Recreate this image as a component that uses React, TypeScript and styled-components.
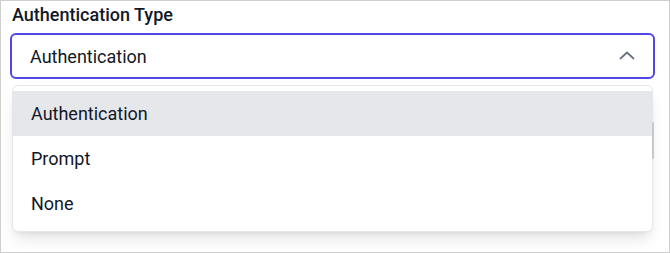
import styled, { createGlobalStyle } from "styled-components";

const GlobalStyle = createGlobalStyle`
  html, body {
    margin: 0;
    padding: 0;
    background: #ffffff;
  }
  * {
    box-sizing: border-box;
  }
`;

const Frame = styled.div`
  width: 670px;
  height: 253px;
  border: 1px solid #cfcfcf;
  padding: 3px 14px 0 9px;
  font-family: Roboto, "Liberation Sans", sans-serif;
  color: #111827;
  overflow: hidden;
`;

const Label = styled.label`
  display: block;
  margin-left: 2px;
  font-size: 18px;
  font-weight: 500;
  line-height: 22px;
  color: #111827;
  margin-bottom: 7px;
`;

const SelectWrap = styled.div`
  position: relative;
`;

const Trigger = styled.button`
  width: 100%;
  height: 46px;
  display: flex;
  align-items: center;
  justify-content: space-between;
  padding: 0 16px 0 18px;
  border: 2px solid #4f46e5;
  border-radius: 6px;
  background: #ffffff;
  font-family: inherit;
  font-size: 18px;
  color: #111827;
  cursor: pointer;
`;

const Chevron = styled.svg`
  width: 20px;
  height: 20px;
  color: #6b7280;
`;

const Menu = styled.ul`
  position: absolute;
  top: 52px;
  left: 2px;
  right: 2px;
  margin: 0;
  padding: 5px 0;
  list-style: none;
  background: #ffffff;
  border: 1px solid #e5e7eb;
  border-radius: 6px;
  box-shadow: 0 10px 15px -3px rgba(0, 0, 0, 0.1),
    0 4px 6px -4px rgba(0, 0, 0, 0.1);
  z-index: 10;
`;

const ScrollThumb = styled.span`
  position: absolute;
  top: 36px;
  right: -2px;
  width: 2px;
  height: 37px;
  border-radius: 1px;
  background: #c8c8cc;
`;

const Option = styled.li<{ $active?: boolean }>`
  height: 45px;
  display: flex;
  align-items: center;
  padding: 0 18px;
  font-size: 18px;
  color: #111827;
  background: ${(p) => (p.$active ? "#e5e7eb" : "transparent")};
  cursor: pointer;
`;

const options = ["Authentication", "Prompt", "None"];

export default function App() {
  return (
    <>
      <GlobalStyle />
      <Frame>
        <Label>Authentication Type</Label>
        <SelectWrap>
          <Trigger type="button">
            <span>Authentication</span>
            <Chevron viewBox="0 0 20 20" fill="none">
              <path
                d="M3.5 12.5 L10 6.5 L16.5 12.5"
                stroke="currentColor"
                strokeWidth="1.8"
                strokeLinecap="round"
                strokeLinejoin="round"
              />
            </Chevron>
          </Trigger>
          <Menu>
            <ScrollThumb />
            {options.map((o, i) => (
              <Option key={o} $active={i === 0}>
                {o}
              </Option>
            ))}
          </Menu>
        </SelectWrap>
      </Frame>
    </>
  );
}
